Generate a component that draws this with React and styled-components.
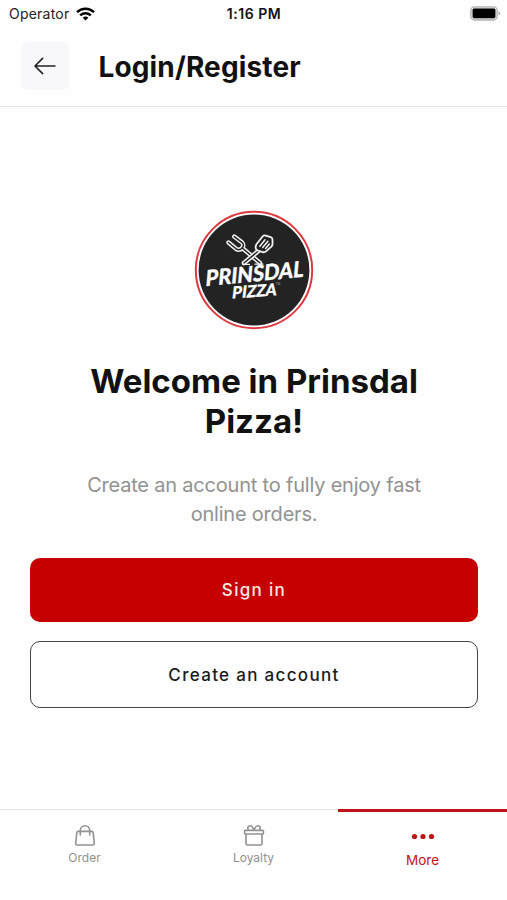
import styled, { createGlobalStyle } from "styled-components";

const GlobalStyle = createGlobalStyle`
  * {
    box-sizing: border-box;
    margin: 0;
    padding: 0;
  }

  body {
    background-color: #fefefe;
    font-family: Inter, sans-serif;
    color: #111;
  }
`;

const Screen = styled.div`
  width: 100%;
  height: 900px;
  display: flex;
  flex-direction: column;
  overflow: hidden;
`;

const StatusBar = styled.div`
  height: 27px;
  padding: 0 6px 0 9px;
  display: grid;
  grid-template-columns: 1fr auto 1fr;
  align-items: center;
`;

const Carrier = styled.div`
  display: flex;
  align-items: center;
  gap: 7px;
  font-size: 14px;
  letter-spacing: 0.22px;
  color: #222;
`;

const Time = styled.span`
  margin-right: 2px;
  font-size: 14px;
  font-weight: 600;
  letter-spacing: 0.55px;
`;

const BatteryIcon = styled.svg`
  justify-self: end;
  margin-top: -1px;
`;

const Header = styled.header`
  height: 80px;
  padding: 0 21px 1px;
  display: flex;
  align-items: center;
  gap: 29.5px;
  border-bottom: 1px solid #e6e6e6;
`;

const BackButton = styled.button`
  width: 48px;
  height: 48px;
  display: flex;
  align-items: center;
  justify-content: center;
  border: none;
  border-radius: 7px;
  background-color: #f8f8fb;
  cursor: pointer;
`;

const Title = styled.h1`
  padding-top: 1px;
  font-size: 28px;
  font-weight: 700;
  letter-spacing: 0.14px;
`;

const Content = styled.main`
  flex: 1;
  padding: 103px 29px 0 30px;
  display: flex;
  flex-direction: column;
  align-items: center;
`;

const Heading = styled.h2`
  margin-top: 31px;
  width: 350px;
  font-size: 33px;
  line-height: 40px;
  font-weight: 700;
  text-align: center;
`;

const Description = styled.p`
  margin-top: 30px;
  width: 350px;
  font-size: 20px;
  line-height: 29px;
  letter-spacing: -0.2px;
  text-align: center;
  color: #929292;
`;

const Actions = styled.div`
  width: 100%;
  margin-top: 29px;
  display: flex;
  flex-direction: column;
  gap: 19px;
`;

const Button = styled.button`
  width: 100%;
  height: ${({ $primary }) => ($primary ? "64px" : "67px")};
  border: ${({ $primary }) => ($primary ? "none" : "1.5px solid #444")};
  border-radius: 10px;
  background-color: ${({ $primary }) => ($primary ? "#c60000" : "transparent")};
  color: ${({ $primary }) => ($primary ? "#fbe9e9" : "#1a1a1a")};
  font-family: inherit;
  font-size: 17px;
  font-weight: 500;
  letter-spacing: 1.32px;
  cursor: pointer;
`;

const TabBar = styled.nav`
  height: 91px;
  display: grid;
  grid-template-columns: repeat(3, 1fr);
  border-top: 1px solid #e4e4e4;
`;

const Tab = styled.a`
  margin-top: -1px;
  padding-top: ${({ $active }) => ($active ? "12px" : "15px")};
  display: flex;
  flex-direction: column;
  align-items: center;
  gap: ${({ $active }) => ($active ? "5px" : "2px")};
  border-top: ${({ $active }) => ($active ? "3px solid #c01318" : "none")};
  color: ${({ $active }) => ($active ? "#c01318" : "#929292")};
  font-size: ${({ $active }) => ($active ? "13.5px" : "12px")};
  line-height: 17px;
  cursor: pointer;
`;

const WifiIcon = () => (
  <svg width="19" height="14" viewBox="0 0 19 14" fill="none" stroke="#000" strokeWidth="2.5">
    <path d="M1 5.1a12.2 12.2 0 0 1 17 0" />
    <path d="M4.2 8.3a7.7 7.7 0 0 1 10.6 0" />
    <path d="M9.5 13.6 6.6 10.7a4.3 4.3 0 0 1 5.8 0z" fill="#000" stroke="none" />
  </svg>
);

const Battery = () => (
  <BatteryIcon width="31" height="15" viewBox="0 0 31 15">
    <rect x="0.8" y="0.8" width="26.4" height="13.2" rx="3.8" fill="#ddd" stroke="#b4b4b4" strokeWidth="1.3" />
    <rect x="2.6" y="2.6" width="22.8" height="9.6" rx="1.6" fill="#000" />
    <path d="M28.6 5.2c2.2.8 2.2 3.6 0 4.4z" fill="#aaa" />
  </BatteryIcon>
);

const ArrowIcon = () => (
  <svg width="22" height="18" viewBox="0 0 22 18" fill="none" stroke="#222" strokeWidth="1.6" strokeLinecap="round" strokeLinejoin="round">
    <path d="M21 9H1M8.6 1.4 1 9l7.6 7.6" />
  </svg>
);

const forkPath = "M34.5 32.5 42 38.8c4.2 2.8 9.6-2.4 6.2-6.2L40.3 26.6M48 37.8 66 53";
const handlePath = "M65.5 40 50 53";

const Logo = () => (
  <svg width="121" height="120" viewBox="0 0 121 120">
    <circle cx="60" cy="60" r="58.2" fill="#fff" stroke="#dc3a40" strokeWidth="2" />
    <circle cx="60" cy="60" r="55.4" fill="#242324" />
    <g fill="none" strokeLinecap="round" strokeLinejoin="round">
      <path d={forkPath} stroke="#f2f2f2" strokeWidth="4.4" />
      <path d={forkPath} stroke="#242324" strokeWidth="1.5" />
      <path d={handlePath} stroke="#f2f2f2" strokeWidth="4.6" />
      <path d={handlePath} stroke="#242324" strokeWidth="1.5" />
      <path d="M62.4 34.3 68.6 26.5q1.3-1.4 3.2-.9l4.9 1.5q1.7.6 1.8 2.4v4.6q-.1 1.5-1.1 2.5l-5.4 4.8q-1.4 1.2-3.2.7l-5-1.6q-2.2-.9-2.2-3 0-1.6.8-3.2z" fill="#242324" stroke="#f2f2f2" strokeWidth="1.8" />
      <path d="m65.8 36.2 5.2-6.4M68.7 37.4l5.2-6.2M71.6 38.4l3.7-4.4" stroke="#f2f2f2" strokeWidth="1.5" />
      <path d="M48.5 54.4h7M61 54.2h8" stroke="#f2f2f2" strokeWidth="1.2" />
    </g>
    <g fill="#fff" stroke="#fff" strokeWidth="0.3" fontFamily="Lato, sans-serif" fontWeight="900">
      <text transform="translate(11 76.2) skewY(-5.5) skewX(-5)" fontSize="22" textLength="98" lengthAdjust="spacingAndGlyphs">
        PRINSDAL
      </text>
      <text transform="translate(37.6 88.4) skewY(-4) skewX(-7)" fontSize="16.5" textLength="44.5" lengthAdjust="spacingAndGlyphs">
        PIZZA
      </text>
    </g>
    <text x="81.5" y="74.5" fill="#aaa" fontFamily="Inter, sans-serif" fontSize="3">TM</text>
  </svg>
);

const BagIcon = () => (
  <svg width="22" height="23" viewBox="0 0 22 23" fill="none" stroke="currentColor" strokeWidth="1.6" strokeLinecap="round" strokeLinejoin="round">
    <path d="M4.3 7.4h13.4c.9 0 1.4.5 1.5 1.4l1.1 10.3c.1 1.2-.6 1.9-1.8 1.9h-15c-1.2 0-1.9-.7-1.8-1.9L2.8 8.8c.1-.9.6-1.4 1.5-1.4z" />
    <path d="M6.3 11V6.4a4.7 4.7 0 0 1 9.4 0V11" />
  </svg>
);

const GiftIcon = () => (
  <svg width="22" height="23" viewBox="0 0 22 23" fill="none" stroke="currentColor" strokeWidth="1.6" strokeLinejoin="round">
    <rect x="1.6" y="6.4" width="18.8" height="3.6" rx="0.7" />
    <path d="M3 10v9.6c0 .9.5 1.4 1.4 1.4h13.2c.9 0 1.4-.5 1.4-1.4V10" />
    <path d="M5.6 6.2C3.8 3.8 5.2 1.8 7 1.8c2.1 0 3.1 1.8 4 4.4.9-2.6 1.9-4.4 4-4.4 1.8 0 3.2 2 1.4 4.4" />
  </svg>
);

const DotsIcon = () => (
  <svg width="24" height="23" viewBox="0 0 24 23" fill="currentColor">
    <circle cx="3.5" cy="12.5" r="2.6" />
    <circle cx="12" cy="12.5" r="2.6" />
    <circle cx="20.5" cy="12.5" r="2.6" />
  </svg>
);

const tabs = [
  { label: "Order", Icon: BagIcon },
  { label: "Loyalty", Icon: GiftIcon },
  { label: "More", Icon: DotsIcon, active: true },
];

const App = () => {
  return (
    <>
      <GlobalStyle />
      <Screen>
        <StatusBar>
          <Carrier>
            Operator
            <WifiIcon />
          </Carrier>
          <Time>1:16 PM</Time>
          <Battery />
        </StatusBar>
        <Header>
          <BackButton aria-label="Back">
            <ArrowIcon />
          </BackButton>
          <Title>Login/Register</Title>
        </Header>
        <Content>
          <Logo />
          <Heading>Welcome in Prinsdal Pizza!</Heading>
          <Description>Create an account to fully enjoy fast online orders.</Description>
          <Actions>
            <Button $primary>Sign in</Button>
            <Button>Create an account</Button>
          </Actions>
        </Content>
        <TabBar>
          {tabs.map(({ label, Icon, active }) => (
            <Tab key={label} $active={active}>
              <Icon />
              {label}
            </Tab>
          ))}
        </TabBar>
      </Screen>
    </>
  );
};

export default App;
